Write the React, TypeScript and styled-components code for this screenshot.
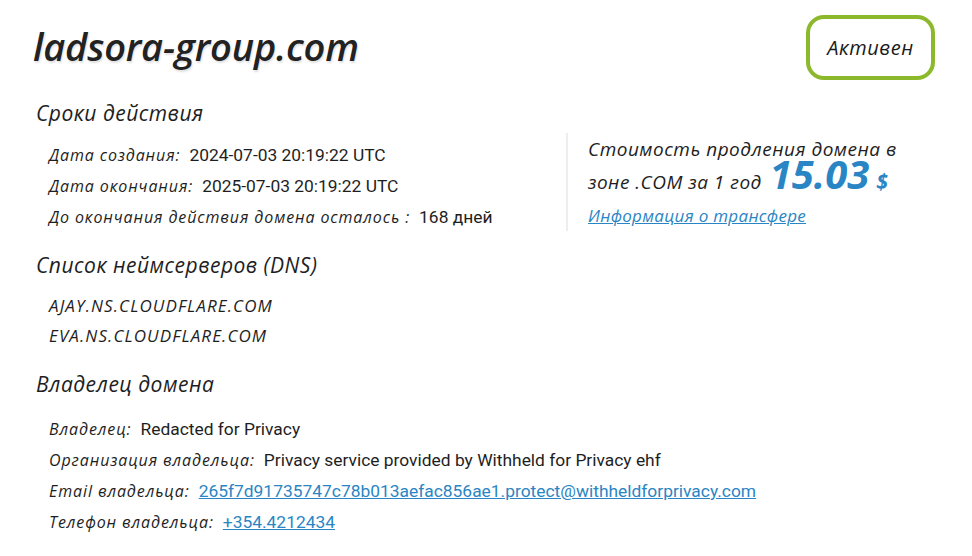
import React from 'react';
import styled, { createGlobalStyle } from 'styled-components';

const GlobalStyle = createGlobalStyle`
  body {
    margin: 0;
    background: #fff;
    font-family: 'Open Sans', 'DejaVu Sans', sans-serif;
    color: #1e1e1e;
  }
`;

const Page = styled.div`
  padding: 15px 37px 0 33px;
`;

const Header = styled.header`
  display: flex;
  justify-content: space-between;
  align-items: flex-start;
`;

const Domain = styled.h1`
  margin: 12px 0 0;
  font-size: 38px;
  line-height: 38px;
  font-style: italic;
  font-weight: 600;
  letter-spacing: -0.2px;
  color: #222;
  text-shadow: 1px 2px 2px rgba(0, 0, 0, 0.12);
`;

const Badge = styled.div`
  width: 121px;
  height: 57px;
  border: 4px solid #8cb82b;
  border-radius: 18px;
  display: flex;
  align-items: center;
  justify-content: center;
  font-size: 20px;
  font-style: italic;
  letter-spacing: 0.6px;
  color: #1a1a1a;
`;

const Top = styled.div`
  display: flex;
  align-items: flex-start;
`;

const LeftCol = styled.div`
  width: 533px;
`;

const Heading = styled.h2<{ $top: number }>`
  margin: ${(p) => p.$top}px 0 0 3px;
  font-size: 21px;
  font-weight: 400;
  font-style: italic;
  letter-spacing: 0.5px;
  color: #1e1e1e;
  line-height: 28px;
`;

const List = styled.div<{ $top: number }>`
  display: flex;
  flex-direction: column;
  gap: 4px;
  padding-left: 16px;
  margin-top: ${(p) => p.$top}px;
`;

const Row = styled.div`
  display: flex;
  align-items: baseline;
  gap: 9px;
  line-height: 27px;
`;

const Label = styled.span`
  font-size: 16px;
  font-style: italic;
  letter-spacing: 0.9px;
  color: #1e1e1e;
`;

const Value = styled.span`
  font-family: 'Roboto', 'Liberation Sans', sans-serif;
  font-size: 17.4px;
  color: #1e1e1e;
`;

const Link = styled.a`
  font-family: 'Roboto', 'Liberation Sans', sans-serif;
  font-size: 17.4px;
  color: #2a85c4;
  text-decoration: underline;
`;

const NsName = styled.div`
  font-style: italic;
  font-size: 17px;
  letter-spacing: 1.1px;
  line-height: 26px;
  color: #1e1e1e;
`;

const PricePanel = styled.aside`
  margin-top: 53px;
  height: 98px;
  border-left: 2px solid #eeeeee;
  padding-left: 20px;
  font-style: italic;
  font-size: 19px;
  letter-spacing: 0.5px;
  color: #1e1e1e;
`;

const PriceLine = styled.div`
  line-height: 33px;
  height: 33px;
  white-space: nowrap;
`;

const Price = styled.span`
  font-size: 40px;
  line-height: 0;
  font-weight: 700;
  color: #2a85c4;
  margin-left: 8px;
  letter-spacing: 0;
`;

const Currency = styled.span`
  font-size: 21px;
  line-height: 0;
  font-weight: 700;
  color: #2a85c4;
  margin-left: 7px;
`;

const TransferLink = styled.a`
  display: block;
  font-size: 17px;
  letter-spacing: 0.3px;
  color: #2a85c4;
  text-decoration: underline;
  line-height: 33px;
`;

const App: React.FC = () => (
  <Page>
    <GlobalStyle />
    <Header>
      <Domain>ladsora-group.com</Domain>
      <Badge>Активен</Badge>
    </Header>
    <Top>
      <LeftCol>
        <Heading $top={19}>Сроки действия</Heading>
        <List $top={15}>
          <Row>
            <Label>Дата создания:</Label>
            <Value>2024-07-03 20:19:22 UTC</Value>
          </Row>
          <Row>
            <Label>Дата окончания:</Label>
            <Value>2025-07-03 20:19:22 UTC</Value>
          </Row>
          <Row>
            <Label>До окончания действия домена осталось :</Label>
            <Value>168 дней</Value>
          </Row>
        </List>
      </LeftCol>
      <PricePanel>
        <PriceLine>Стоимость продления домена в</PriceLine>
        <PriceLine>
          зоне .COM за 1 год<Price>15.03</Price>
          <Currency>$</Currency>
        </PriceLine>
        <TransferLink href="#">Информация о трансфере</TransferLink>
      </PricePanel>
    </Top>
    <Heading $top={20}>Список неймсерверов (DNS)</Heading>
    <List $top={14}>
      <NsName>AJAY.NS.CLOUDFLARE.COM</NsName>
      <NsName>EVA.NS.CLOUDFLARE.COM</NsName>
    </List>
    <Heading $top={21}>Владелец домена</Heading>
    <List $top={18}>
      <Row>
        <Label>Владелец:</Label>
        <Value>Redacted for Privacy</Value>
      </Row>
      <Row>
        <Label>Организация владельца:</Label>
        <Value>Privacy service provided by Withheld for Privacy ehf</Value>
      </Row>
      <Row>
        <Label>Email владельца:</Label>
        <Link href="#">265f7d91735747c78b013aefac856ae1.protect@withheldforprivacy.com</Link>
      </Row>
      <Row>
        <Label>Телефон владельца:</Label>
        <Link href="#">+354.4212434</Link>
      </Row>
    </List>
  </Page>
);

export default App;
